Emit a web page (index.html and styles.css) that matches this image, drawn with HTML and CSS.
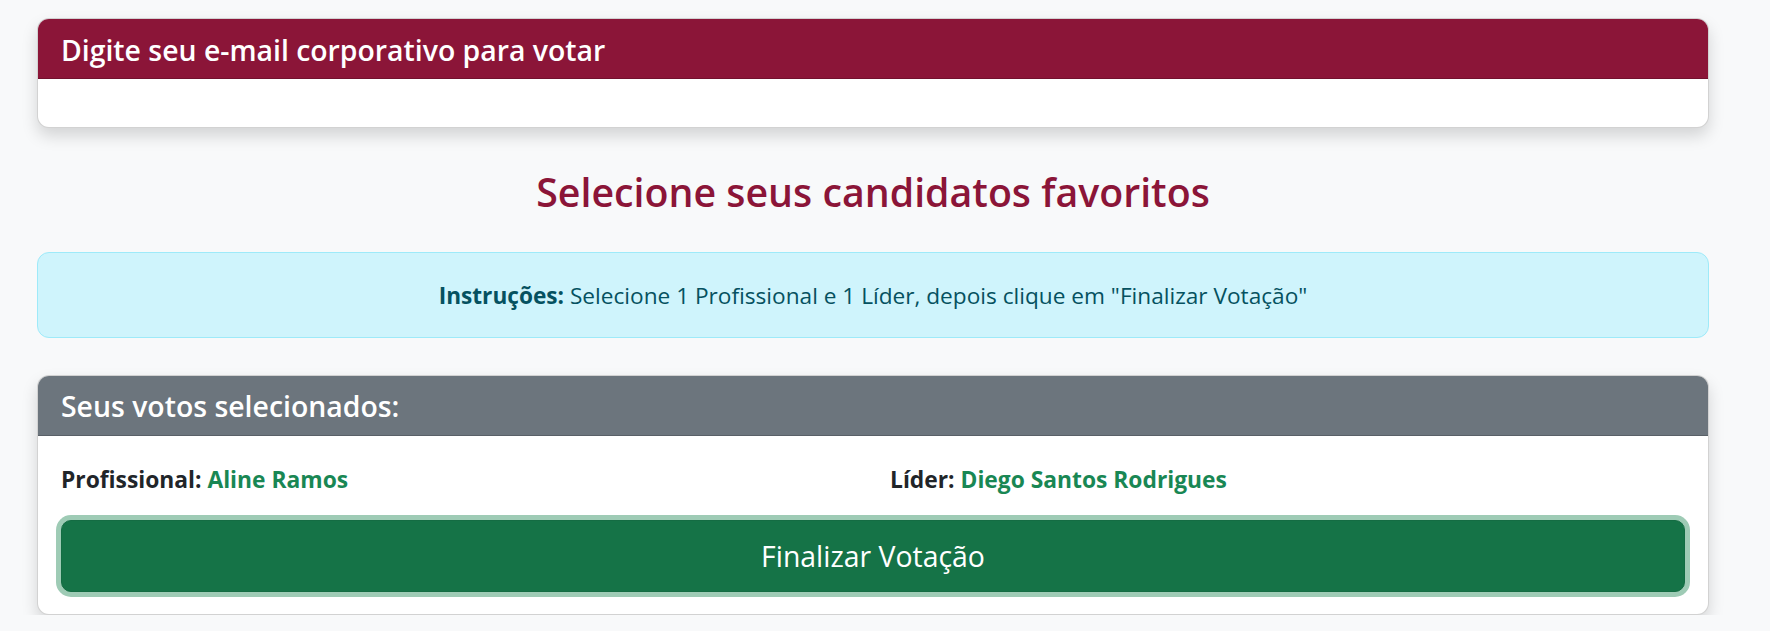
FILE: index.html
```html
<!DOCTYPE html>
<html lang="pt-BR">
<head>
<meta charset="utf-8">
<title>Votação</title>
<link rel="stylesheet" href="styles.css">
</head>
<body>
<main class="page">
  <section class="card card-shadow">
    <header class="card-header header-brand">
      <h4 class="card-title">Digite seu e-mail corporativo para votar</h4>
    </header>
    <div class="card-body card-body-empty"></div>
  </section>

  <h2 class="page-title">Selecione seus candidatos favoritos</h2>

  <div class="alert-info">
    <strong>Instruções:</strong> Selecione 1 Profissional e 1 Líder, depois clique em "Finalizar Votação"
  </div>

  <section class="card card-shadow">
    <header class="card-header header-secondary">
      <h4 class="card-title">Seus votos selecionados:</h4>
    </header>
    <div class="card-body votes-body">
      <div class="votes-row">
        <div class="vote"><span class="vote-label">Profissional:</span> <span class="vote-name">Aline Ramos</span></div>
        <div class="vote"><span class="vote-label">Líder:</span> <span class="vote-name">Diego Santos Rodrigues</span></div>
      </div>
      <button class="btn-finish" type="button">Finalizar Votação</button>
    </div>
  </section>
</main>
</body>
</html>
```

FILE: styles.css
```css
* { box-sizing: border-box; }

html, body {
  margin: 0;
  padding: 0;
  background: #f8f9fa;
  font-family: "Open Sans", "Noto Sans", "Liberation Sans", sans-serif;
  color: #212529;
}

.page {
  width: 1672px;
  margin-left: 37px;
  padding-top: 18px;
  display: flex;
  flex-direction: column;
}

.card {
  background: #fff;
  border: 1px solid rgba(0, 0, 0, 0.175);
  border-radius: 12px;
  overflow: hidden;
}

.card-shadow {
  box-shadow: 0 8px 16px rgba(0, 0, 0, 0.15);
}

.card-header {
  padding: 13.5px 23px 11.5px;
  border-bottom: 1px solid rgba(0, 0, 0, 0.175);
  color: #fff;
}

.header-brand { background: #8b1538; }
.header-secondary { background: #6c757d; }

.card-title {
  margin: 0;
  font-size: 28.4px;
  line-height: 34px;
  font-weight: 600;
}

.card-body-empty {
  height: 48px;
}

.page-title {
  margin: 41px 0 36px;
  text-align: center;
  color: #8b1538;
  font-size: 39.3px;
  line-height: 46.8px;
  font-weight: 600;
}

.alert-info {
  background: #cff4fc;
  border: 1px solid #9eeaf9;
  color: #055160;
  border-radius: 12px;
  padding: 26px 23px 24px;
  text-align: center;
  font-size: 22.65px;
  line-height: 34px;
  margin-bottom: 37px;
}

.alert-info strong { font-weight: 700; }

.votes-body {
  padding: 27px 23px 22px;
  display: flex;
  flex-direction: column;
  gap: 24px;
}

.votes-row {
  display: grid;
  grid-template-columns: 1fr 1fr;
  column-gap: 34px;
}

.vote {
  font-size: 22.8px;
  line-height: 33px;
  font-weight: 700;
}

.vote-label { color: #212529; }
.vote-name { color: #198754; }

.btn-finish {
  height: 72px;
  width: 100%;
  background: #157347;
  border: 1px solid #146c43;
  border-radius: 10px;
  color: #fff;
  font-family: inherit;
  font-size: 28.4px;
  font-weight: 400;
  box-shadow: 0 0 0 5px #9ecbb5;
  cursor: pointer;
  display: flex;
  align-items: center;
  justify-content: center;
}
```
